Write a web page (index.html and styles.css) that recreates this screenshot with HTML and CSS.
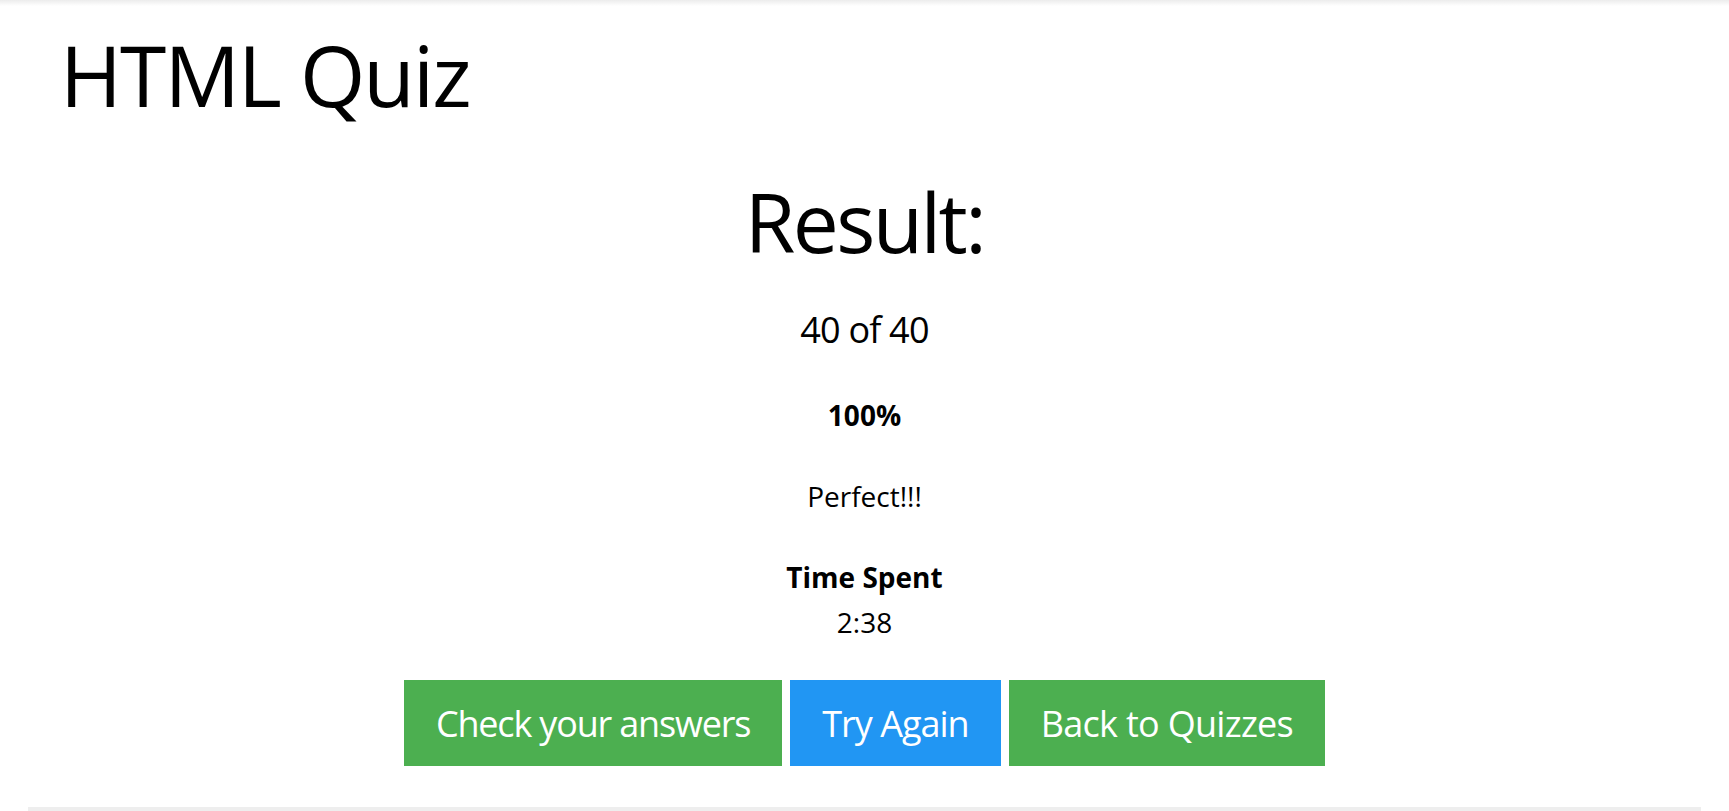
FILE: index.html
```html
<!DOCTYPE html>
<html lang="en">
<head>
<meta charset="utf-8">
<title>HTML Quiz</title>
<link rel="stylesheet" href="styles.css">
</head>
<body>
<div class="topbar"></div>
<main class="page">
  <h1 class="quiz-title">HTML Quiz</h1>
  <section class="result">
    <h2 class="result-title">Result:</h2>
    <p class="score">40 of 40</p>
    <p class="percent">100%</p>
    <p class="verdict">Perfect!!!</p>
    <p class="time-label">Time Spent</p>
    <p class="time-value">2:38</p>
    <div class="actions">
      <a class="btn btn-green btn-check">Check your answers</a>
      <a class="btn btn-blue">Try Again</a>
      <a class="btn btn-green btn-back">Back to Quizzes</a>
    </div>
  </section>
  <div class="rule"></div>
</main>
</body>
</html>
```
FILE: styles.css
```css
html, body {
  margin: 0;
  padding: 0;
  background: #fff;
  color: #000;
  font-family: "Open Sans", "Noto Sans", sans-serif;
  overflow: hidden;
}

.topbar {
  height: 6px;
  background: linear-gradient(#ececec, #ffffff);
}

.page {
  display: flex;
  flex-direction: column;
}

.quiz-title {
  margin: 19px 0 0 60px;
  font-size: 84px;
  line-height: 100px;
  font-weight: 400;
  letter-spacing: -1.9px;
}

.result {
  display: flex;
  flex-direction: column;
  align-items: center;
  text-align: center;
}

.result p {
  margin: 0;
}

.result-title {
  margin: 46px 0 0;
  font-size: 82px;
  line-height: 100px;
  font-weight: 400;
  letter-spacing: -2.6px;
}

.score {
  margin-top: 34px !important;
  font-size: 36px;
  line-height: 50px;
  letter-spacing: -0.8px;
}

.percent,
.verdict,
.time-label,
.time-value {
  font-size: 28px;
  line-height: 40px;
}

.percent {
  margin-top: 40px !important;
  font-weight: 700;
}

.verdict {
  margin-top: 41px !important;
}

.time-label {
  margin-top: 41px !important;
  font-weight: 700;
}

.time-value {
  margin-top: 5px !important;
}

.actions {
  display: flex;
  gap: 8px;
  margin-top: 38px;
}

.btn {
  display: flex;
  align-items: center;
  height: 86px;
  padding: 0 32px;
  font-size: 36px;
  letter-spacing: -1px;
  color: #fff;
  text-decoration: none;
}

.btn-check {
  letter-spacing: -1.18px;
}

.btn-back {
  letter-spacing: -0.7px;
}

.btn-green {
  background: #4caf50;
}

.btn-blue {
  background: #2196f3;
}

.rule {
  margin: 41px 28px 0;
  height: 8px;
  background: #eeeeee;
}
```
